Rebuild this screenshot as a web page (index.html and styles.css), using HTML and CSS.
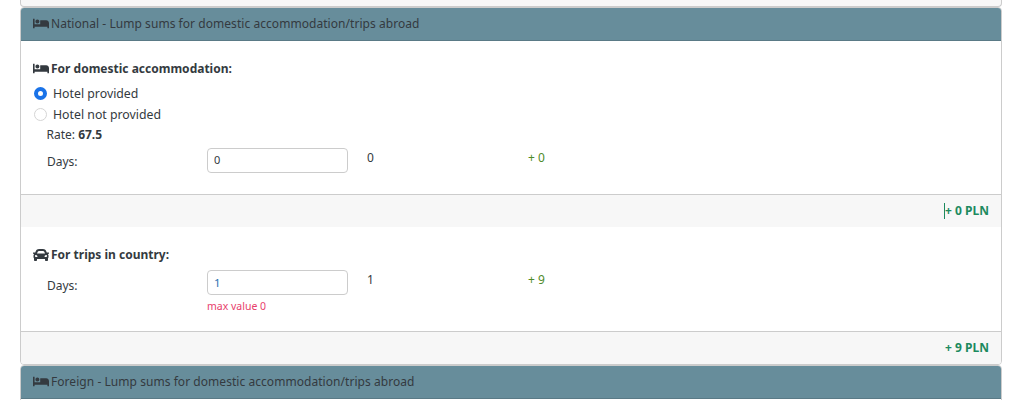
FILE: index.html
```html
<!DOCTYPE html>
<html lang="en">
<head>
<meta charset="utf-8">
<title>Lump sums</title>
<link rel="stylesheet" href="styles.css">
</head>
<body>
<svg width="0" height="0" class="defs">
  <symbol id="bed" viewBox="0 0 640 512"><path d="M176 256c44.11 0 80-35.89 80-80s-35.89-80-80-80-80 35.89-80 80 35.89 80 80 80zm352-128H304c-8.84 0-16 7.16-16 16v144H64V80c0-8.84-7.16-16-16-16H16C7.16 64 0 71.16 0 80v352c0 8.84 7.16 16 16 16h32c8.84 0 16-7.16 16-16v-48h512v48c0 8.84 7.16 16 16 16h32c8.84 0 16-7.16 16-16V240c0-61.86-50.14-112-112-112z"/></symbol>
  <symbol id="car" viewBox="0 0 512 512"><path d="M499.99 176h-59.87l-16.64-41.6C406.38 91.63 365.57 64 319.5 64h-127c-46.06 0-86.88 27.63-103.99 70.4L71.87 176H12.01C4.2 176-1.53 183.34.37 190.91l6 24C7.7 220.25 12.5 224 18.01 224h20.07C24.65 235.73 16 252.78 16 272v48c0 16.12 6.16 30.67 16 41.93V416c0 17.67 14.33 32 32 32h32c17.67 0 32-14.33 32-32v-32h256v32c0 17.67 14.33 32 32 32h32c17.67 0 32-14.33 32-32v-54.07c9.84-11.25 16-25.8 16-41.93v-48c0-19.22-8.65-36.27-22.07-48H494c5.51 0 10.31-3.75 11.64-9.09l6-24c1.89-7.57-3.84-14.91-11.65-14.91zm-352.06-17.83c7.29-18.22 24.94-30.17 44.57-30.17h127c19.63 0 37.28 11.95 44.57 30.17L384 208H128l19.93-49.83zM96 319.8c-19.2 0-32-12.76-32-31.9S76.8 256 96 256s48 28.71 48 47.85-28.8 15.95-48 15.95zm320 0c-19.2 0-48 3.19-48-15.95S396.8 256 416 256s32 12.76 32 31.9-12.8 31.9-32 31.9z"/></symbol>
</svg>
<div class="prev-card"></div>
<section class="card">
  <header class="card-header"><svg class="icon"><use href="#bed"/></svg>National - Lump sums for domestic accommodation/trips abroad</header>
  <div class="card-body first">
    <h3 class="title"><svg class="icon"><use href="#bed"/></svg>For domestic accommodation:</h3>
    <div class="radio"><span class="dot checked"></span>Hotel provided</div>
    <div class="radio"><span class="dot"></span>Hotel not provided</div>
    <div class="rate">Rate: <b>67.5</b></div>
    <div class="row">
      <label class="label">Days:</label>
      <div class="field"><input class="input" type="text" value="0"></div>
      <div class="val">0</div>
      <div class="plus">+ 0</div>
    </div>
  </div>
  <footer class="card-footer"><span class="caret">+ 0 PLN</span></footer>
  <div class="card-body second">
    <h3 class="title"><svg class="icon car"><use href="#car"/></svg>For trips in country:</h3>
    <div class="row">
      <label class="label">Days:</label>
      <div class="field"><input class="input blue" type="text" value="1"><div class="error">max value 0</div></div>
      <div class="val">1</div>
      <div class="plus">+ 9</div>
    </div>
  </div>
  <footer class="card-footer"><span>+ 9 PLN</span></footer>
</section>
<section class="card next">
  <header class="card-header"><svg class="icon"><use href="#bed"/></svg>Foreign - Lump sums for domestic accommodation/trips abroad</header>
</section>
</body>
</html>
```
FILE: styles.css
```css
* { box-sizing: border-box; }
html, body { height: 400px; overflow: hidden; }
body {
  margin: 0;
  padding: 0 20px;
  background: #fff;
  color: #343a40;
  font-family: "Noto Sans", "Open Sans", sans-serif;
  font-size: 12px;
  line-height: 18px;
}
.defs { position: absolute; }
.prev-card {
  height: 8px;
  margin-top: -1px;
  background: #f7f7f7;
  border: 1px solid #ccc;
  border-top: 0;
  border-radius: 0 0 4px 4px;
}
.card {
  width: 982px;
  border: 1px solid #ccc;
  border-radius: 4px;
  background: #fff;
  overflow: hidden;
}
.card.next { height: 60px; }
.card-header {
  height: 33px;
  padding: 7px 12px;
  background: #678d9b;
  border-bottom: 1px solid #5a7a86;
  color: #343a40;
  letter-spacing: 0.05px;
}
.icon {
  width: 16px;
  height: 13px;
  margin-right: 2px;
  vertical-align: -2px;
  fill: #343a40;
}
.icon.car { width: 16px; height: 16px; vertical-align: -4px; }
.card-body { padding: 19px 12px 0; }
.card-body.first { height: 153px; }
.card-body.second { height: 104px; }
.title { margin: 0 0 5px; font-size: 12px; line-height: 18px; font-weight: 700; }
.radio { display: flex; align-items: center; height: 21px; gap: 6px; padding-left: 1px; font-size: 12.3px; }
.dot { width: 13px; height: 13px; border-radius: 50%; border: 1px solid #d5d5d5; background: #fff; }
.dot.checked { border: 4.5px solid #1a73e8; }
.rate { padding-left: 13.5px; height: 20px; line-height: 20px; }
.row { display: grid; grid-template-columns: 160px 160px 161px 1fr; padding-left: 14px; margin-top: 3px; }
.second .row { margin-top: 6px; }
.label { line-height: 26px; padding-top: 1px; }
.second .label { padding-top: 3px; }
.input {
  display: block;
  width: 141px;
  height: 25px;
  padding: 0 6px 2px;
  border: 1px solid #ccc;
  border-radius: 4px;
  background: #fff;
  color: #343a40;
  font: inherit;
  font-size: 11px;
  outline: 0;
}
.input.blue { padding-bottom: 0; font-size: 11.5px; color: #1f6fb0; }
.error { margin-top: 3px; font-size: 10.5px; line-height: 16px; color: #e83e6c; }
.val { line-height: 20px; }
.plus { line-height: 20px; color: #4f8a2a; }
.card-footer {
  height: 33px;
  padding: 7px 12px;
  border-top: 1px solid #ccc;
  background: #f7f7f7;
  text-align: right;
  font-weight: 700;
  color: #1d8a5f;
}
.caret { display: inline-block; border-left: 1px solid #1d8a5f; line-height: 16px; }
```
